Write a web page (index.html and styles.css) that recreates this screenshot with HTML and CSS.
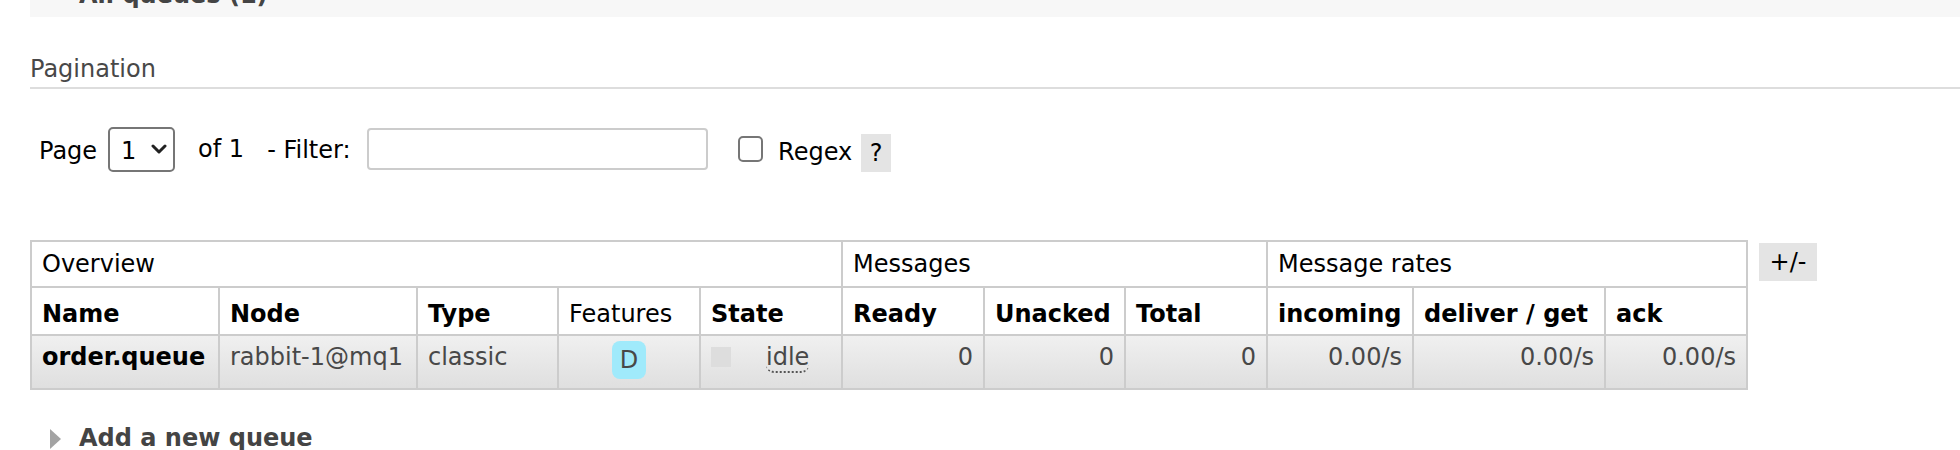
FILE: index.html
```html
<!DOCTYPE html>
<html lang="en">
<head>
<meta charset="utf-8">
<title>Queues</title>
<link rel="stylesheet" href="styles.css">
</head>
<body>
<div class="page">
  <div class="section-head open">
    <h2>All queues (1)</h2>
  </div>

  <h3 class="pag-title">Pagination</h3>
  <div class="pager">
    <span class="lbl lbl-page">Page</span>
    <span class="select">
      <select aria-label="Page"><option>1</option></select>
      <svg class="chev" width="16" height="10" viewBox="0 0 16 10"><path d="M2 2 L8 8 L14 2" fill="none" stroke="#222" stroke-width="3" stroke-linecap="round" stroke-linejoin="round"/></svg>
    </span>
    <span class="lbl lbl-of">of 1</span>
    <span class="lbl lbl-filter">- Filter:</span>
    <input class="filter" type="text" aria-label="Filter">
    <input class="chk" type="checkbox" aria-label="Regex">
    <span class="lbl lbl-regex">Regex</span>
    <span class="help">?</span>
  </div>

  <div class="table-wrap">
    <div class="qtable">
      <div class="cell r1 span5">Overview</div>
      <div class="cell r1 span3">Messages</div>
      <div class="cell r1 span3">Message rates</div>

      <div class="cell r2 b">Name</div>
      <div class="cell r2 b">Node</div>
      <div class="cell r2 b">Type</div>
      <div class="cell r2">Features</div>
      <div class="cell r2 b">State</div>
      <div class="cell r2 b">Ready</div>
      <div class="cell r2 b">Unacked</div>
      <div class="cell r2 b">Total</div>
      <div class="cell r2 b">incoming</div>
      <div class="cell r2 b">deliver / get</div>
      <div class="cell r2 b">ack</div>

      <div class="cell r3 d name">order.queue</div>
      <div class="cell r3 d">rabbit-1@mq1</div>
      <div class="cell r3 d">classic</div>
      <div class="cell r3 d feat"><abbr class="badge" title="durable: true">D</abbr></div>
      <div class="cell r3 d state"><span class="sq"></span><abbr class="idle" title="idle">idle</abbr></div>
      <div class="cell r3 d num">0</div>
      <div class="cell r3 d num">0</div>
      <div class="cell r3 d num">0</div>
      <div class="cell r3 d num">0.00/s</div>
      <div class="cell r3 d num">0.00/s</div>
      <div class="cell r3 d num">0.00/s</div>
    </div>
    <span class="plusminus">+/-</span>
  </div>

  <div class="section-head closed">
    <span class="tri"></span>
    <h2>Add a new queue</h2>
  </div>
</div>
</body>
</html>
```

FILE: styles.css
```css
html, body {
  margin: 0;
  padding: 0;
  background: #fff;
}

body {
  font-family: "DejaVu Sans", Verdana, sans-serif;
  color: #484848;
  font-size: 24px;
  line-height: 28px;
}

.page {
  padding-left: 30px;
}

/* collapsible section headers */
.section-head {
  display: flex;
  align-items: flex-start;
}

.section-head h2 {
  margin: 0;
  font-size: 24px;
  line-height: 28px;
  font-weight: bold;
  color: #444;
}

.section-head.open {
  background: #f7f7f7;
  height: 17px;
  overflow: hidden;
  padding-left: 49px;
}

.section-head.open h2 {
  margin-top: -19px;
}

.section-head.closed {
  margin-top: 34px;
  padding-left: 20px;
}

.tri {
  width: 0;
  height: 0;
  margin-top: 5px;
  margin-right: 18px;
  border-left: 11px solid #a3a3a3;
  border-top: 10px solid transparent;
  border-bottom: 10px solid transparent;
}

/* pagination */
.pag-title {
  margin: 38px 0 0 0;
  font-size: 24px;
  line-height: 28px;
  font-weight: normal;
  color: #484848;
  padding-bottom: 4px;
  border-bottom: 2px solid #dddddd;
}

.pager {
  margin-top: 37px;
  height: 46px;
  display: flex;
  align-items: center;
  color: #000;
}

.lbl {
  white-space: nowrap;
  padding-top: 4px;
}

.lbl-page { margin-left: 9px; }
.lbl-of { margin-left: 23px; padding-top: 0; }
.lbl-filter { margin-left: 23px; padding-top: 2px; }
.lbl-regex { margin-left: 15.5px; padding-top: 6px; }

.select {
  position: relative;
  margin-left: 11px;
  display: flex;
}

.select select {
  appearance: none;
  -webkit-appearance: none;
  width: 67px;
  height: 45px;
  box-sizing: border-box;
  border: 2px solid #767676;
  border-radius: 5px;
  background: #fff;
  color: #000;
  font-family: "DejaVu Sans", Verdana, sans-serif;
  font-size: 24px;
  padding: 4px 0 0 11px;
  margin: 0;
}

.chev {
  position: absolute;
  left: 43px;
  top: 17px;
  pointer-events: none;
}

.filter {
  margin: 0 0 0 16px;
  width: 341px;
  height: 42px;
  box-sizing: border-box;
  border: 2px solid #cccccc;
  border-radius: 4px;
  padding: 0 6px;
  font-family: "DejaVu Sans", Verdana, sans-serif;
  font-size: 22px;
  background: #fff;
}

.chk {
  appearance: none;
  -webkit-appearance: none;
  margin: 0 0 0 30px;
  width: 25px;
  height: 26px;
  box-sizing: border-box;
  border: 2px solid #767676;
  border-radius: 5px;
  background: #fff;
}

.help {
  margin-left: 9px;
  margin-top: 8px;
  width: 30px;
  height: 38px;
  background: #e4e4e4;
  color: #000;
  text-align: center;
  line-height: 38px;
}

/* table */
.table-wrap {
  margin-top: 68px;
  display: flex;
  align-items: flex-start;
}

.qtable {
  display: grid;
  grid-template-columns: 188px 198px 141px 142px 142px 142px 141px 142px 146px 192px 142px;
  border-top: 2px solid #cccccc;
  border-left: 2px solid #cccccc;
  font-size: 24px;
  line-height: 28px;
}

.cell {
  box-sizing: border-box;
  border-right: 2px solid #cccccc;
  border-bottom: 2px solid #cccccc;
  padding: 0 10px;
  color: #000;
  white-space: nowrap;
  background: #fff;
}

.span5 { grid-column: span 5; }
.span3 { grid-column: span 3; }

.r1 { height: 46px; padding-top: 8px; }
.r2 { height: 48px; padding-top: 12px; }
.r3 { height: 54px; padding-top: 7px; }

.b { font-weight: bold; }

.d {
  background: linear-gradient(#f0f0f0, #dfdfdf);
  color: #484848;
}

.d.name {
  color: #000;
  font-weight: bold;
}

.num { text-align: right; }

.feat {
  display: flex;
  justify-content: center;
  align-items: flex-start;
  padding-top: 5px;
}

.badge {
  display: block;
  text-decoration: none;
  background: #a0eafb;
  color: #484848;
  border-radius: 8px;
  padding: 5px 8px;
}

.state {
  display: flex;
  align-items: flex-start;
}

.sq {
  width: 20px;
  height: 20px;
  margin-top: 4px;
  margin-right: 35px;
  background: #dddddd;
}

.idle {
  text-decoration: none;
  border-bottom: 2px dotted #555;
  border-radius: 0 0 8px 8px;
}

.plusminus {
  margin-left: 11px;
  margin-top: 3px;
  width: 58px;
  height: 38px;
  background: #e4e4e4;
  color: #000;
  font-size: 24px;
  line-height: 38px;
  text-align: center;
}
```
